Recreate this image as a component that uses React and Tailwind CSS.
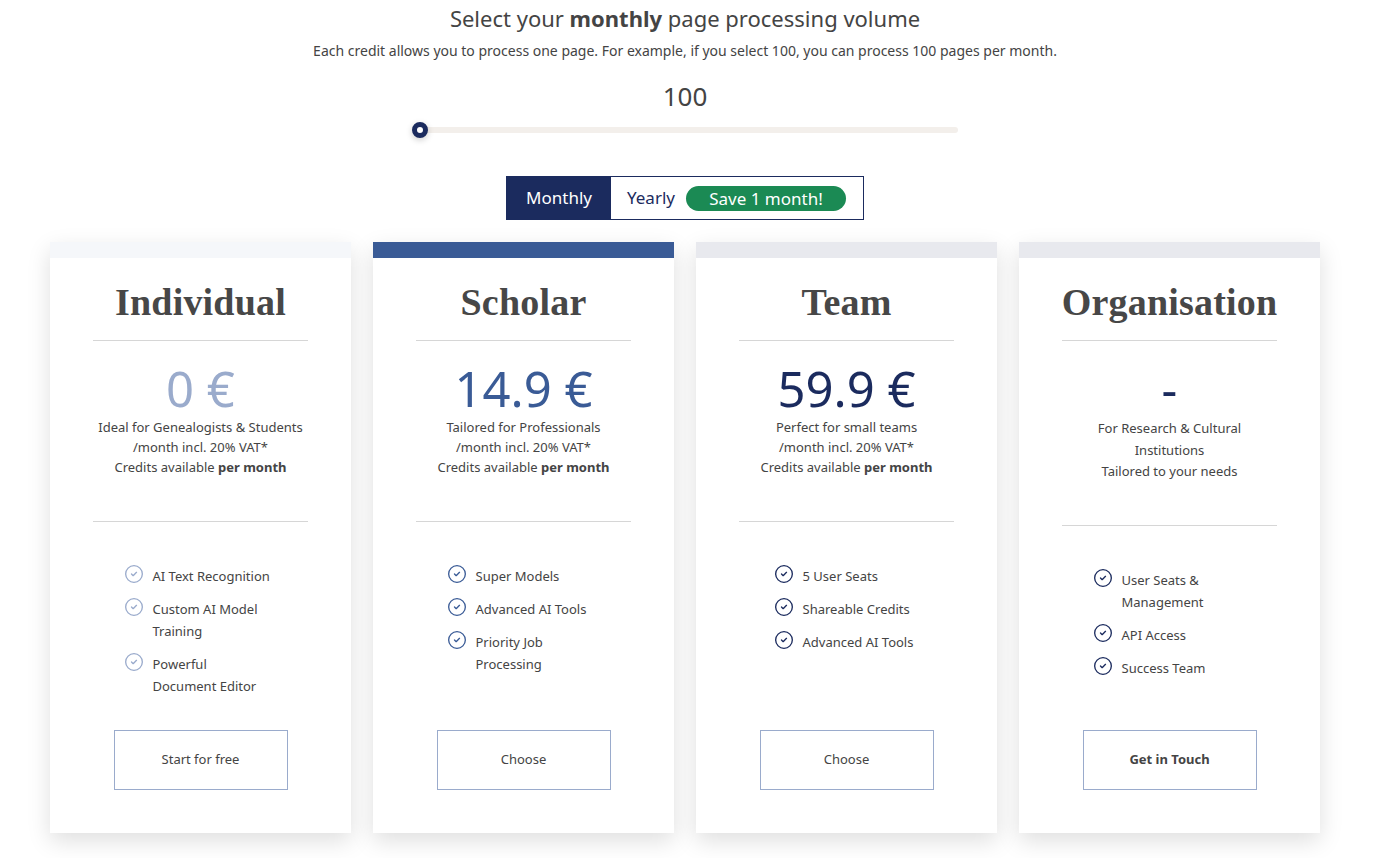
import { CircleCheck } from "lucide-react";

const plans = [
    {
        name: "Individual",
        bar: "bg-[#f5f7fa]",
        price: "0 €",
        priceColor: "text-[#9aabcc]",
        iconColor: "text-[#9aabcc]",
        lines: ["Ideal for Genealogists & Students", "/month incl. 20% VAT*"],
        credits: true,
        features: ["AI Text Recognition", "Custom AI Model Training", "Powerful Document Editor"],
        button: "Start for free",
    },
    {
        name: "Scholar",
        bar: "bg-[#3a5b96]",
        price: "14.9 €",
        priceColor: "text-[#3a5b96]",
        iconColor: "text-[#3a5b96]",
        lines: ["Tailored for Professionals", "/month incl. 20% VAT*"],
        credits: true,
        features: ["Super Models", "Advanced AI Tools", "Priority Job Processing"],
        button: "Choose",
    },
    {
        name: "Team",
        bar: "bg-[#e8e9ee]",
        price: "59.9 €",
        priceColor: "text-[#1b2b5e]",
        iconColor: "text-[#1b2b5e]",
        lines: ["Perfect for small teams", "/month incl. 20% VAT*"],
        credits: true,
        features: ["5 User Seats", "Shareable Credits", "Advanced AI Tools"],
        button: "Choose",
    },
    {
        name: "Organisation",
        bar: "bg-[#e8e9ee]",
        price: "-",
        priceColor: "text-[#1b2b5e]",
        iconColor: "text-[#1b2b5e]",
        lines: ["For Research & Cultural Institutions", "Tailored to your needs"],
        credits: false,
        features: ["User Seats & Management", "API Access", "Success Team"],
        button: "Get in Touch",
        bold: true,
    },
];

function PlanCard({ plan }) {
    return (
        <div className="w-[301px] h-[591px] bg-white flex flex-col shadow-[0_8px_22px_rgba(0,0,0,0.13)]">
            <div className={`h-4 ${plan.bar}`} />
            <div className="flex flex-col items-center px-[43px] pt-[21px] flex-1">
                {/* Title */}
                <h2 className="font-['Liberation_Serif',serif] font-bold text-[38px] leading-[46px] text-[#474747] tracking-[0.2px]">
                    {plan.name}
                </h2>
                <div className="w-full h-px bg-[#d6d6d6] mt-[15px]" />

                {/* Price */}
                <div className={`mt-[22px] text-[49px] leading-[50px] ${plan.priceColor}`}>{plan.price}</div>
                <div className="mt-[4px] text-[13px] text-[#444] text-center">
                    {plan.credits ? (
                        <>
                            {plan.lines.map((l) => (
                                <p key={l} className="leading-5">{l}</p>
                            ))}
                            <p className="leading-5">
                                Credits available <span className="font-bold">per month</span>
                            </p>
                        </>
                    ) : (
                        <>
                            <p className="leading-[22px] w-[160px]">{plan.lines[0]}</p>
                            <p className="leading-5">{plan.lines[1]}</p>
                        </>
                    )}
                </div>
                <div className="w-full h-px bg-[#d6d6d6] mt-[44px]" />

                {/* Features */}
                <ul className="mt-[43px] pr-[6px] flex flex-col gap-[11px]">
                    {plan.features.map((f) => (
                        <li key={f} className="flex gap-[9px] text-[13px] leading-[22px] text-[#444]">
                            <CircleCheck className={`w-5 h-5 mt-[-1px] shrink-0 ${plan.iconColor}`} strokeWidth={1.6} />
                            <span className="min-w-0 max-w-[119px]">{f}</span>
                        </li>
                    ))}
                </ul>

                <button
                    className={`mt-auto mb-[43px] w-[174px] h-[60px] border border-[#9aabcc] text-[13px] text-[#444] ${plan.bold ? "font-bold" : ""}`}
                >
                    {plan.button}
                </button>
            </div>
        </div>
    );
}

function App() {
    return (
        <div className="w-[1370px] min-h-[858px] bg-white font-['Noto_Sans',sans-serif] text-[#444] flex flex-col items-center">
            {/* Header */}
            <h1 className="mt-[3px] text-[22px] leading-[30px] text-[#444]">
                Select your <span className="font-bold">monthly</span> page processing volume
            </h1>
            <p className="mt-[8px] text-[14px] leading-[20px]">
                Each credit allows you to process one page. For example, if you select 100, you can process 100 pages per month.
            </p>
            <div className="mt-[17px] text-[26px] leading-[36px]">100</div>

            {/* Slider */}
            <div className="relative w-[546px] h-4 mt-[8px] flex items-center">
                <div className="ml-2 flex-1 h-[6px] rounded-full bg-[#f3efeb]" />
                <div className="absolute left-0 top-0 w-4 h-4 rounded-full border-[5px] border-[#1b2b5e] bg-white shadow-[0_2px_6px_rgba(0,0,0,0.2)]" />
            </div>

            {/* Billing toggle */}
            <div className="mt-[38px] flex h-[44px] border border-[#1b2b5e]">
                <div className="w-[104px] bg-[#1b2b5e] text-white text-[17px] flex items-center justify-center">
                    Monthly
                </div>
                <div className="flex items-center pl-[16px] pr-[17px] gap-[11px]">
                    <span className="text-[17px] text-[#1b2b5e]">Yearly</span>
                    <span className="w-[160px] h-[25px] rounded-full bg-[#1b8a54] text-white text-[17px] leading-[25px] text-center">
                        Save 1 month!
                    </span>
                </div>
            </div>

            {/* Plans */}
            <div className="mt-[22px] flex gap-[22px]">
                {plans.map((p) => (
                    <PlanCard key={p.name} plan={p} />
                ))}
            </div>
        </div>
    );
}

export default App;
